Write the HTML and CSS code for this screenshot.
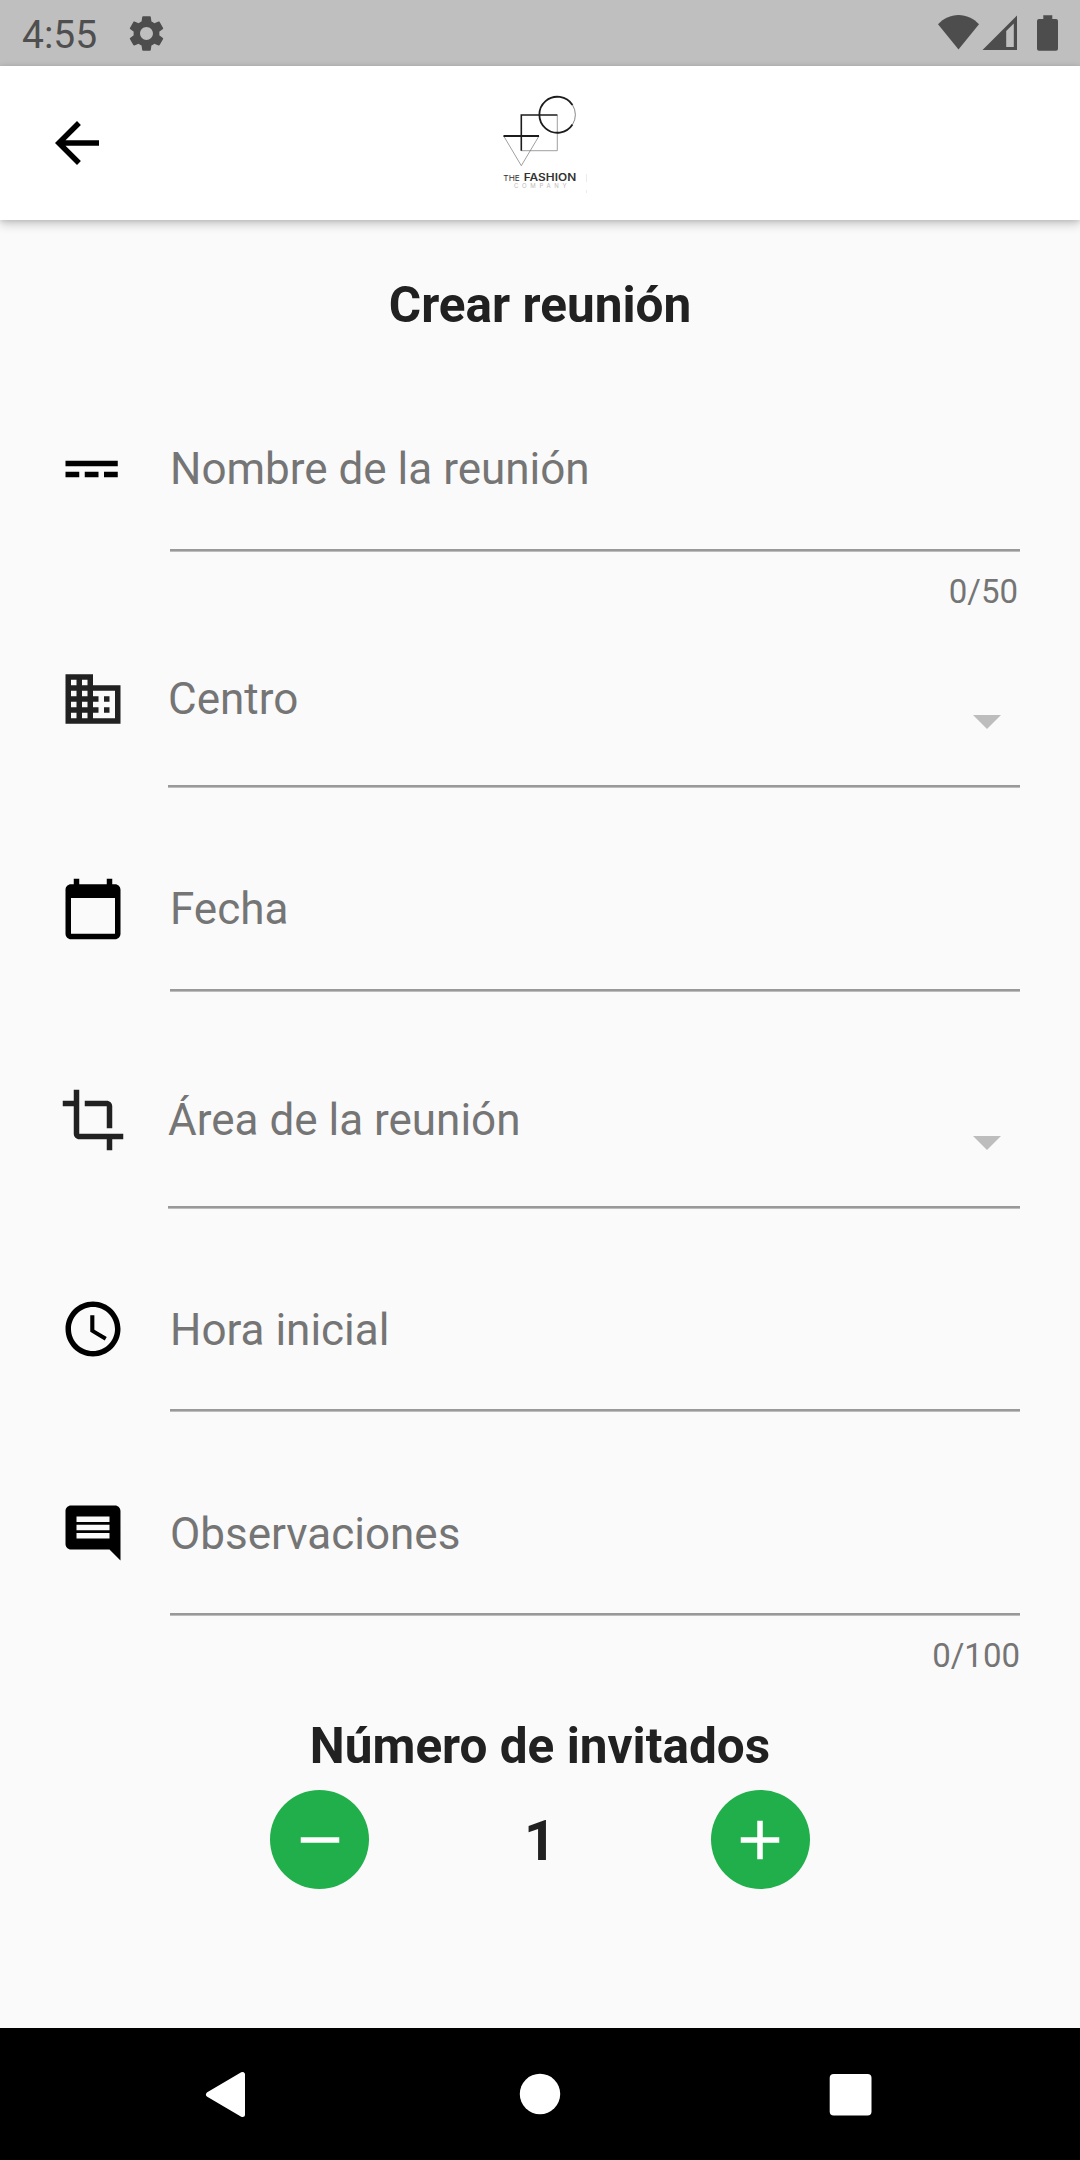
FILE: index.html
```html
<!DOCTYPE html>
<html lang="es">
<head>
<meta charset="utf-8">
<title>Crear reunión</title>
<link rel="stylesheet" href="styles.css">
</head>
<body>
<div class="screen">
  <div class="status">
    <span class="clock">4:55</span>
    <svg class="gear" viewBox="0 0 24 24"><path d="M19.14 12.94c.04-.3.06-.61.06-.94 0-.32-.02-.64-.07-.94l2.03-1.58c.18-.14.23-.41.12-.61l-1.92-3.32c-.12-.22-.37-.29-.59-.22l-2.39.96c-.5-.38-1.03-.7-1.62-.94l-.36-2.54c-.04-.24-.24-.41-.48-.41h-3.84c-.24 0-.43.17-.47.41l-.36 2.54c-.59.24-1.13.57-1.62.94l-2.39-.96c-.22-.08-.47 0-.59.22L2.74 8.87c-.12.21-.08.47.12.61l2.03 1.58c-.05.3-.09.63-.09.94s.02.64.07.94l-2.03 1.58c-.18.14-.23.41-.12.61l1.92 3.32c.12.22.37.29.59.22l2.39-.96c.5.38 1.03.7 1.62.94l.36 2.54c.05.24.24.41.48.41h3.84c.24 0 .44-.17.47-.41l.36-2.54c.59-.24 1.13-.56 1.62-.94l2.39.96c.22.08.47 0 .59-.22l1.92-3.32c.12-.22.07-.47-.12-.61l-2.01-1.58zM12 15.6c-1.98 0-3.6-1.62-3.6-3.6s1.62-3.6 3.6-3.6 3.6 1.62 3.6 3.6-1.62 3.6-3.6 3.6z"/></svg>
    <svg class="signals" viewBox="0 0 124 40"><path d="M0 12.2C5.600 6.500 12.500 3 20.500 3s15 3.500 20.500 9.200L20.500 37.500z"/><path fill-rule="evenodd" d="M44.500 38L79 3.500V38zM68.200 35h7.600V11.500l-7.600 7.600z"/><path d="M105.300 3.300h9v3.700h3.700q2 0 2 2v27.700q0 2-2 2h-17q-2 0-2-2V9q0-2 2-2h4.300z"/></svg>
  </div>
  <header class="appbar">
    <svg class="back" viewBox="0 0 24 24"><path d="M20 11H7.830l5.590-5.590L12 4l-8 8 8 8 1.410-1.410L7.830 13H20v-2z"/></svg>
    <svg class="logo" viewBox="0 0 90 120">
      <g fill="none" stroke="#1c1c1c">
        <path stroke-width=".7" stroke="#777" d="M57.300 34.700v36H21.300M3.700 56l17.600 29.700L39 56"/>
        <path stroke-width="1.600" d="M57.300 35H21.300v35.700"/>
        <path stroke-width="1.900" d="M3.500 56H39"/>
        <path stroke-width=".7" stroke="#555" d="M72.500 25a18 18 0 0 1 0 19.500"/>
        <path stroke-width="1.800" d="M72.500 25a18 18 0 1 0 0 19.500"/>
      </g>
      <text class="logo-the" x="3.300" y="101" textLength="16.500" lengthAdjust="spacingAndGlyphs">THE</text>
      <text class="logo-name" x="23.700" y="101" textLength="52.500" lengthAdjust="spacingAndGlyphs">FASHION</text>
      <text class="logo-sub" x="14" y="108" textLength="52.500">COMPANY</text>
      <path stroke="#e6e6e6" stroke-width=".8" d="M86.500 94v8M86.500 110v3"/>
    </svg>
  </header>
  <main class="content">
    <h1 class="heading">Crear reunión</h1>
    <div class="row first">
      <svg class="icon" viewBox="0 0 24 24"><path d="M2 9v2h19V9H2zm0 6h5v-2H2v2zm7 0h5v-2H9v2zm7 0h5v-2h-5v2z"/></svg>
      <div class="field">Nombre de la reunión</div>
    </div>
    <div class="counter short">0/50</div>
    <div class="row select center">
      <svg class="icon soft" viewBox="0 0 24 24"><path d="M12 7V3H2v18h20V7H12zM6 19H4v-2h2v2zm0-4H4v-2h2v2zm0-4H4V9h2v2zm0-4H4V5h2v2zm4 12H8v-2h2v2zm0-4H8v-2h2v2zm0-4H8V9h2v2zm0-4H8V5h2v2zm10 12h-8v-2h2v-2h-2v-2h2v-2h-2V9h8v10zm-2-8h-2v2h2v-2zm0 4h-2v2h2v-2z"/></svg>
      <div class="field">Centro<svg class="caret" viewBox="0 0 10 5"><path d="M0 0h10L5 5z"/></svg></div>
    </div>
    <div class="row date">
      <svg class="icon" viewBox="0 0 24 24"><path d="M20 3h-1V1h-2v2H7V1H5v2H4c-1.100 0-2 .9-2 2v16c0 1.100.9 2 2 2h16c1.100 0 2-.9 2-2V5c0-1.100-.9-2-2-2zm0 18H4V8h16v13z"/></svg>
      <div class="field">Fecha</div>
    </div>
    <div class="row select area">
      <svg class="icon soft" viewBox="0 0 24 24"><path d="M17 15h2V7c0-1.100-.9-2-2-2H9v2h8v8zM7 17V1H5v4H1v2h4v10c0 1.100.9 2 2 2h10v4h2v-4h4v-2H7z"/></svg>
      <div class="field">Área de la reunión<svg class="caret" viewBox="0 0 10 5"><path d="M0 0h10L5 5z"/></svg></div>
    </div>
    <div class="row time">
      <svg class="icon" viewBox="0 0 24 24"><path d="M11.990 2C6.470 2 2 6.480 2 12s4.470 10 9.990 10C17.520 22 22 17.520 22 12S17.520 2 11.990 2zM12 20c-4.420 0-8-3.580-8-8s3.580-8 8-8 8 3.580 8 8-3.580 8-8 8zm.5-13H11v6l5.250 3.150.75-1.230-4.500-2.670z"/></svg>
      <div class="field">Hora inicial</div>
    </div>
    <div class="row notes">
      <svg class="icon" viewBox="0 0 24 24"><path d="M21.990 4c0-1.100-.89-2-1.990-2H4c-1.100 0-2 .9-2 2v12c0 1.100.9 2 2 2h14l4 4-.01-18zM18 14H6v-2h12v2zm0-3H6V9h12v2zm0-3H6V6h12v2z"/></svg>
      <div class="field">Observaciones</div>
    </div>
    <div class="counter">0/100</div>
    <h2 class="heading guests">Número de invitados</h2>
    <div class="stepper">
      <button class="round"><svg viewBox="0 0 24 24"><path d="M19 13H5v-2h14v2z"/></svg></button>
      <span class="count">1</span>
      <button class="round"><svg viewBox="0 0 24 24"><path d="M19 13h-6v6h-2v-6H5v-2h6V5h2v6h6v2z"/></svg></button>
    </div>
  </main>
  <nav class="navbar">
    <svg viewBox="0 0 1080 132"><path stroke="#fff" stroke-width="5" stroke-linejoin="round" d="M208.500 66.500L242.500 46.500v40z"/><circle cx="540" cy="66" r="20.200"/><rect x="829.700" y="46" width="41.800" height="41.500" rx="4"/></svg>
  </nav>
</div>
</body>
</html>
```
FILE: styles.css
```css
* { box-sizing: border-box; }
body { margin: 0; background: #fafafa; font-family: Roboto, "Liberation Sans", sans-serif; color: #212121; }
.screen { width: 1080px; height: 2160px; display: flex; flex-direction: column; overflow: hidden; }
svg { display: block; flex: none; }

.status { height: 66px; background: #bfbfbf; color: #4f4f4f; display: flex; align-items: flex-start; padding: 0 18px 0 22px; }
.status svg { fill: #4d4d4d; }
.clock { font-size: 39px; line-height: 46px; padding-top: 12px; width: 103px; }
.gear { width: 43px; height: 43px; margin-top: 12px; }
.signals { width: 124px; height: 40px; margin: 12px 0 0 auto; }

.appbar { height: 154px; background: #fff; display: flex; box-shadow: 0 4px 10px rgba(0,0,0,.2), 0 1px 5px rgba(0,0,0,.12); z-index: 1; }
.back { width: 66px; height: 66px; margin: 44px 0 0 44px; }
.logo { width: 90px; height: 120px; margin: 14px 0 0 390px; }
.logo text { font-family: Inter, sans-serif; fill: #333; }
.logo .logo-the { font-size: 8px; }
.logo .logo-name { font-size: 10px; font-weight: 600; }
.logo .logo-sub { font-size: 6px; fill: #bbb; }

.content { flex: 1; padding: 56px 60px 0; display: flex; flex-direction: column; }
.heading { margin: 0; font-size: 49.5px; line-height: 58px; font-weight: 700; text-align: center; }
.row { display: flex; height: 116px; }
.icon { width: 66px; height: 66px; margin: 0 44px 0 0; }
.icon.soft { fill: #212121; }
.field { flex: 1; display: flex; justify-content: space-between; margin-bottom: 1px; padding-top: 7px; font-size: 44px; line-height: 52px; color: #757575; border-bottom: 2px solid #999; box-shadow: 0 1px #bdbdbd; }
.select { height: 122px; }
.select .icon { margin-right: 42px; }
.select .field { padding-top: 7px; }
.caret { width: 28px; height: 14px; margin: 42px 19px 0 0; fill: #bdbdbd; }
.first { margin-top: 102px; }
.counter { height: 39px; margin-top: 20px; text-align: right; font-size: 33px; line-height: 39px; color: #757575; }
.short { padding-right: 2px; }
.center { margin-top: 55px; }
.date { margin-top: 88px; }
.area { margin-top: 95px; }
.time { margin-top: 87px; }
.time .field, .notes .field { padding-top: 8px; }
.notes { margin-top: 88px; }
.guests { margin-top: 42px; }
.stepper { display: flex; justify-content: space-between; align-items: center; width: 540px; margin: 15px auto 0; }
.round { width: 99px; height: 99px; border: 0; border-radius: 50%; background: #20af4b; padding: 0; display: grid; place-items: center; }
.round svg { width: 66px; height: 66px; fill: #fff; }
.count { font-size: 56px; line-height: 66px; font-weight: 700; padding-top: 3px; }

.navbar { height: 132px; background: #000; }
.navbar svg { width: 1080px; height: 132px; fill: #fff; }
```
